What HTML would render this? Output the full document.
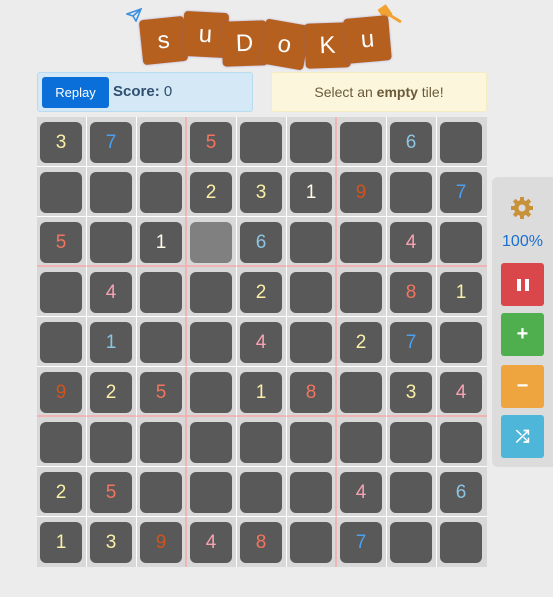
<!DOCTYPE html>
<html><head><meta charset="utf-8"><style>
body{margin:0;width:553px;height:597px;background:#ececec;font-family:"Liberation Sans",sans-serif;position:relative;overflow:hidden}
.lt{position:absolute;width:45px;height:45px;background:#b5601f;border-radius:4px;box-shadow:0 0 2px rgba(120,100,200,.5);color:#fff;font:24px "Comic Sans MS","Liberation Sans",sans-serif;text-align:center;line-height:45px}
.bar{position:absolute;top:72px;height:40px;border-radius:3px;box-sizing:border-box}
#grid{position:absolute;left:37px;top:117px;width:450px;height:450px;background:#d8d8d8}
.c{position:absolute;width:50px;height:50px;box-sizing:border-box}
.t{position:absolute;left:3px;top:5px;width:42px;height:41px;background:#595959;border-radius:6px;text-align:center;line-height:41px;font-size:19px}
.side{position:absolute;left:492px;top:177px;width:70px;height:290px;background:#dcdcdc;border-radius:6px}
.b{position:absolute;left:9px;width:43px;height:43px;border-radius:3px;color:#fff;text-align:center;line-height:43px;font-weight:bold;font-size:20px}
</style></head><body>
<svg style="position:absolute;left:126px;top:8px" width="16" height="14" viewBox="0 0 16 14"><path d="M1 6 L15 1 L10 13 L7 8 Z M7 8 L15 1" fill="none" stroke="#3d8fe0" stroke-width="1.6"/></svg>
<svg style="position:absolute;left:377px;top:2px" width="28" height="22" viewBox="0 0 28 22"><rect x="3" y="4" width="10" height="12" rx="1" fill="#f2a230" transform="rotate(-35 8 10)"/><path d="M11 12 L24 20" stroke="#f2a230" stroke-width="3"/></svg>
<div class="lt" style="left:141px;top:18px;transform:rotate(-6deg)">s</div>
<div class="lt" style="left:183px;top:12px;transform:rotate(3deg)">u</div>
<div class="lt" style="left:222px;top:21px;transform:rotate(-2deg)">D</div>
<div class="lt" style="left:262px;top:22px;transform:rotate(10deg)">o</div>
<div class="lt" style="left:305px;top:23px;transform:rotate(-2deg)">K</div>
<div class="lt" style="left:345px;top:17px;transform:rotate(-5deg)">u</div>
<div class="bar" style="left:37px;width:216px;background:#d4e8f6;border:1px solid #b8dbf2">
<div style="position:absolute;left:4px;top:4px;width:67px;height:31px;background:#0a6fd8;border-radius:3px;color:#fff;font-size:13px;line-height:31px;text-align:center">Replay</div>
<div style="position:absolute;left:75px;top:0;line-height:38px;font-size:15px;color:#2f4f6f"><b>Score:</b> 0</div></div>
<div class="bar" style="left:271px;width:216px;background:#fcf6dc;border:1px solid #f6ecc2;text-align:center;line-height:38px;font-size:14px;color:#6b5a3a">Select an <b>empty</b> tile!</div>
<div id="grid"></div>
<div class="side">
<svg style="position:absolute;left:18px;top:19px" width="24" height="24" viewBox="0 0 24 24"><g fill="#c8923a"><circle cx="12" cy="12" r="8"/><rect x="10" y="1" width="4" height="22"/><rect x="1" y="10" width="22" height="4"/><rect x="10" y="1" width="4" height="22" transform="rotate(45 12 12)"/><rect x="10" y="1" width="4" height="22" transform="rotate(-45 12 12)"/></g><circle cx="12" cy="12" r="3.5" fill="#dcdcdc"/></svg>
<div style="position:absolute;left:0;width:61px;top:56px;text-align:center;color:#1a6fd0;font-size:16px">100%</div>
<div class="b" style="top:86px;background:#d9474a"><svg width="14" height="14" viewBox="0 0 14 14" style="vertical-align:middle"><rect x="1" y="1" width="4" height="12" fill="#fff"/><rect x="9" y="1" width="4" height="12" fill="#fff"/></svg></div>
<div class="b" style="top:136px;background:#4fae4e">+</div>
<div class="b" style="top:188px;background:#eea43f">−</div>
<div class="b" style="top:238px;background:#4db6d9;font-size:17px">⤮</div>
</div>
<script>
var d=["3y,7b,,5s,,,,6l,",",,,2y,3y,1w,9r,,7b","5s,,1w,G,6l,,,4p,",",4p,,,2y,,,8s,1y",",1l,,,4p,,2y,7b,","9r,2y,5s,,1y,8s,,3y,4p",",,,,,,,,","2y,5s,,,,,4p,,6l","1y,3y,9r,4p,8s,,7b,,"];
var col={y:"#fbf0a8",b:"#4a9ff0",s:"#f2745e",l:"#8cc4e4",p:"#f5a2b2",w:"#fffbe6",r:"#d0531e"};
var g=document.getElementById("grid"),h="";
for(var r=0;r<9;r++){var row=d[r].split(",");for(var c=0;c<9;c++){var v=row[c]||"";
var br=(c==2||c==5)?"2px solid #f0b4b6":(c<8?"1px solid #fff":"none");
var bb=(r==2||r==5)?"2px solid #f0b4b6":(r<8?"1px solid #fff":"none");
var tile=v=="G"?'<div class="t" style="background:#808080"></div>':'<div class="t" style="color:'+(v?col[v[1]]:"")+'">'+(v?v[0]:"")+'</div>';
h+='<div class="c" style="left:'+c*50+'px;top:'+r*50+'px;border-right:'+br+';border-bottom:'+bb+'">'+tile+'</div>';}}
g.innerHTML=h;
</script>
</body></html>
